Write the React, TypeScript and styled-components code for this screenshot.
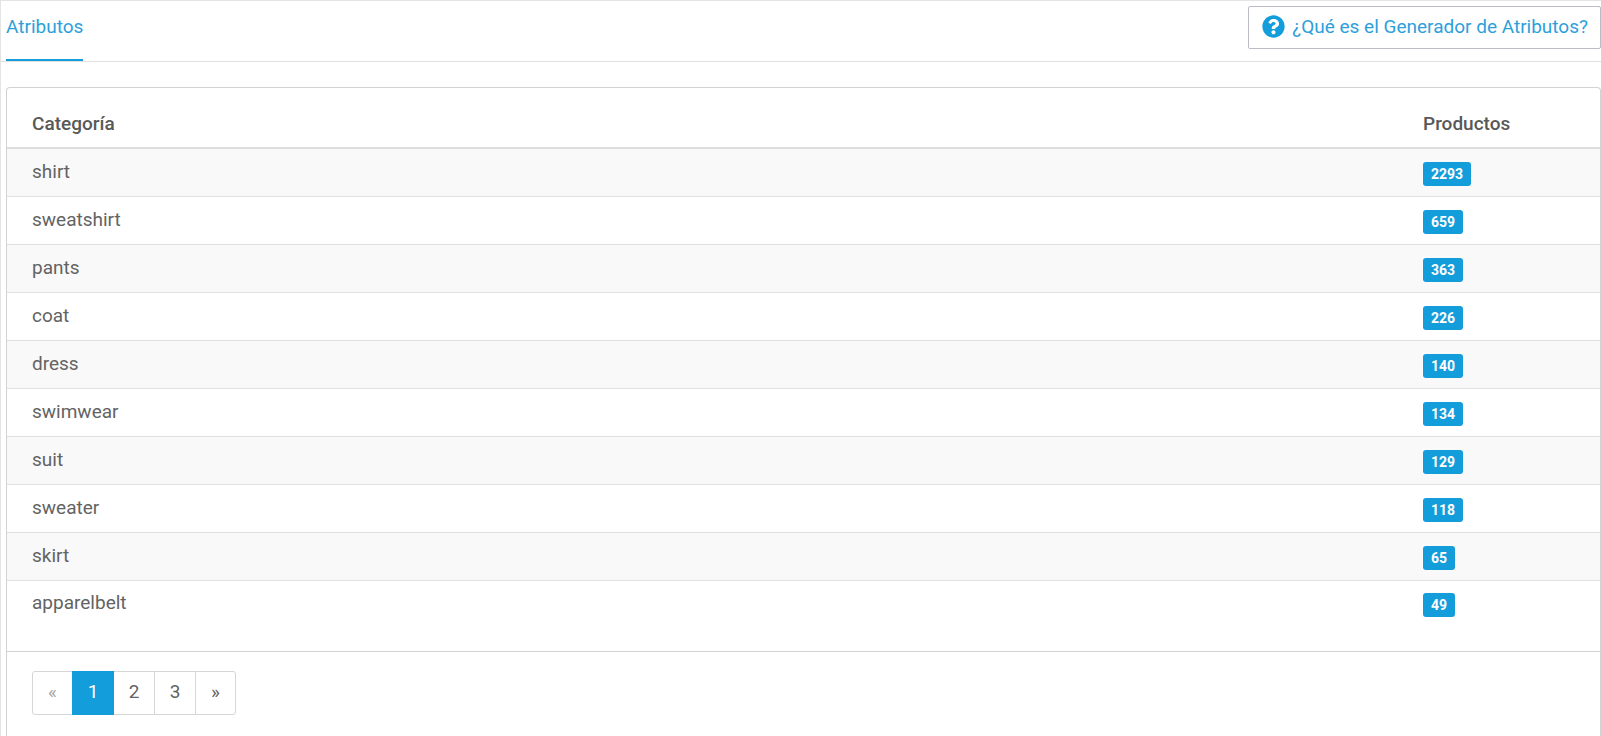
import React, { useState } from 'react';
import styled, { createGlobalStyle } from 'styled-components';
import { FaQuestionCircle } from 'react-icons/fa';

const GlobalStyle = createGlobalStyle`
  *, *::before, *::after { box-sizing: border-box; }
  body {
    margin: 0;
    background: #fff;
    color: #636363;
    font-family: Roboto, "Liberation Sans", sans-serif;
    font-size: 19px;
    line-height: 24px;
  }
`;

const Page = styled.main`
  display: flex;
  flex-direction: column;
  height: 100vh;
  overflow: hidden;
  border-top: 1px solid #e4e4e4;
  border-left: 1px solid #e4e4e4;
`;

const TopBar = styled.header`
  flex: none;
  display: flex;
  justify-content: space-between;
  align-items: flex-start;
  height: 61px;
  padding-left: 5px;
  border-bottom: 1px solid #e0e0e0;
`;

const Tab = styled.a`
  height: 60px;
  padding-top: 14px;
  border-bottom: 2px solid #139ddb;
  color: #2e9fdb;
  text-decoration: none;
`;

const HelpButton = styled.button`
  display: flex;
  align-items: center;
  gap: 7px;
  height: 43px;
  margin-top: 5px;
  padding: 0 12px 2px 13px;
  border: 1px solid #bcbcc4;
  border-radius: 2px;
  background: #fff;
  color: #2e9fdb;
  font: inherit;
  cursor: pointer;

  svg { color: #139ddb; }
`;

const Card = styled.section`
  flex: 1 0 auto;
  margin: 25px 0 0 5px;
  padding-top: 12px;
  border: 1px solid #d2d2d2;
  border-bottom: 0;
  border-radius: 4px 4px 0 0;
`;

const Table = styled.table`
  width: 100%;
  border-collapse: separate;
  border-spacing: 0;
  table-layout: fixed;
`;

const HeadCell = styled.th<{ $width?: string }>`
  width: ${({ $width }) => $width ?? 'auto'};
  height: 49px;
  padding: 0 0 0 25px;
  border-bottom: 2px solid #dedede;
  color: #585858;
  font-weight: 500;
  text-align: left;
`;

const Cell = styled.td`
  height: 48px;
  padding: 0 0 2px 25px;
  border-bottom: 1px solid #e0e0e0;
`;

const Row = styled.tr`
  &:nth-child(odd) { background: #f9f9f9; }
  &:last-child ${Cell} { height: 46px; border-bottom: 0; }
`;

const Badge = styled.span`
  display: block;
  width: fit-content;
  margin-top: 4px;
  padding: 0 8px;
  border-radius: 3px;
  background: #139ddb;
  color: #fff;
  font-size: 14px;
  font-weight: 700;
  line-height: 24px;
`;

const CardFooter = styled.footer`
  margin-top: 24px;
  padding: 19px 25px;
  border-top: 1px solid #d2d2d2;
`;

const Pagination = styled.nav`
  display: flex;
`;

const PageButton = styled.button<{ $active?: boolean }>`
  width: 42px;
  height: 44px;
  margin-left: -1px;
  padding: 0 0 2px;
  border: 1px solid ${({ $active }) => ($active ? '#139ddb' : '#d6d6d6')};
  background: ${({ $active }) => ($active ? '#139ddb' : '#fff')};
  color: ${({ $active }) => ($active ? '#fff' : '#636363')};
  font: inherit;
  z-index: ${({ $active }) => ($active ? 1 : 0)};
  cursor: pointer;

  &:first-child { width: 41px; margin-left: 0; border-radius: 3px 0 0 3px; }
  &:last-child { width: 41px; border-radius: 0 3px 3px 0; }
  &:disabled { color: #a8a8a8; cursor: default; }
`;

const categories: [string, number][] = [
  ['shirt', 2293],
  ['sweatshirt', 659],
  ['pants', 363],
  ['coat', 226],
  ['dress', 140],
  ['swimwear', 134],
  ['suit', 129],
  ['sweater', 118],
  ['skirt', 65],
  ['apparelbelt', 49],
];

const pages = [1, 2, 3];

export default function App() {
  const [page, setPage] = useState(1);

  return (
    <>
      <GlobalStyle />
      <Page>
        <TopBar>
          <Tab href="#atributos">Atributos</Tab>
          <HelpButton type="button">
            <FaQuestionCircle size={23} aria-hidden />
            ¿Qué es el Generador de Atributos?
          </HelpButton>
        </TopBar>
        <Card>
          <Table>
            <thead>
              <tr>
                <HeadCell scope="col">Categoría</HeadCell>
                <HeadCell scope="col" $width="202px">Productos</HeadCell>
              </tr>
            </thead>
            <tbody>
              {categories.map(([name, count]) => (
                <Row key={name}>
                  <Cell>{name}</Cell>
                  <Cell><Badge>{count}</Badge></Cell>
                </Row>
              ))}
            </tbody>
          </Table>
          <CardFooter>
            <Pagination>
              <PageButton type="button" disabled={page === 1} onClick={() => setPage(page - 1)}>«</PageButton>
              {pages.map((n) => (
                <PageButton key={n} type="button" $active={n === page} onClick={() => setPage(n)}>{n}</PageButton>
              ))}
              <PageButton type="button" disabled={page === pages.length} onClick={() => setPage(page + 1)}>»</PageButton>
            </Pagination>
          </CardFooter>
        </Card>
      </Page>
    </>
  );
}
